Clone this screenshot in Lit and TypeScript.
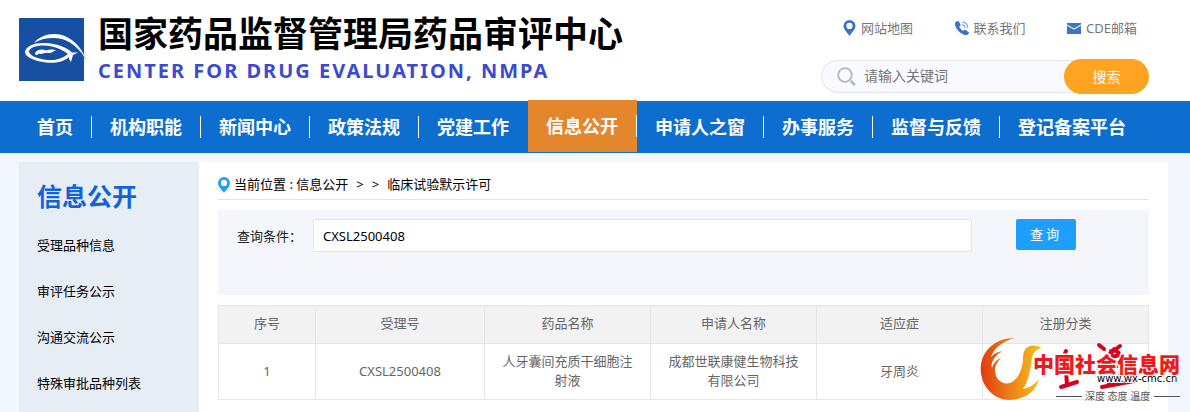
import { LitElement, html, css, svg } from "lit";
import { customElement, property } from "lit/decorators.js";
import { classMap } from "lit/directives/class-map.js";

const NAV = ["首页", "机构职能", "新闻中心", "政策法规", "党建工作", "信息公开", "申请人之窗", "办事服务", "监督与反馈", "登记备案平台"];
const SIDE = ["受理品种信息", "审评任务公示", "沟通交流公示", "特殊审批品种列表"];
const COLUMNS = ["序号", "受理号", "药品名称", "申请人名称", "适应症", "注册分类"];
const ROWS = [["1", "CXSL2500408", "人牙囊间充质干细胞注射液", "成都世联康健生物科技有限公司", "牙周炎", ""]];

const pin = svg`<path fill="currentColor" fill-rule="evenodd" d="M6 0a6 6 0 0 1 6 6c0 3.6-3.4 6-6 10C3.400 12 0 9.600 0 6a6 6 0 0 1 6-6zm0 2.800a3.100 3.100 0 1 0 0 6.200 3.100 3.100 0 0 0 0-6.200z"/>`;

@customElement("site-header")
class SiteHeader extends LitElement {
  static styles = css`
    :host { display: block; background: #fff; }
    .header { display: flex; justify-content: space-between; align-items: flex-start; padding: 0 41px 0 19px; min-height: 101px; box-sizing: border-box; }
    .brand { display: flex; gap: 11px; padding-top: 15px; }
    .emblem { width: 68px; height: 63px; margin-top: 3px; flex: none; }
    .title { margin: 0; font-size: 35px; line-height: 38px; font-weight: 700; color: #000; white-space: nowrap; }
    .subtitle { margin: 6px 0 0; font-size: 20px; line-height: 24px; font-weight: 700; letter-spacing: 2px; color: #3a4bcf; white-space: nowrap; }
    .tools { width: 328px; padding-top: 18px; }
    .links { display: flex; justify-content: space-between; padding: 0 12px 0 22px; }
    .link { display: flex; align-items: center; gap: 5px; font-size: 13px; line-height: 20px; color: #777; text-decoration: none; }
    .link svg { color: #3a74c8; flex: none; }
    .search { display: flex; margin-top: 21px; align-items: center; height: 35px; }
    .box { flex: 1; min-width: 0; display: flex; align-items: center; gap: 8px; height: 33px; box-sizing: border-box; border: 1px solid #e2e4e8; border-radius: 17px; background: #f9faff; padding-left: 15px; margin-right: -24px; padding-right: 24px; }
    .box input { flex: 1; min-width: 0; border: 0; outline: 0; background: none; padding: 0 0 2px; font: inherit; font-size: 14px; color: #555; }
    .box input::placeholder { color: #757575; opacity: 1; }
    .go { width: 85px; height: 35px; border: 0; border-radius: 18px; background: #ffa421; color: #fff; font: inherit; font-size: 14px; padding: 0 0 2px; position: relative; }
  `;
  render() {
    return html`
      <header class="header">
        <div class="brand">
          <svg class="emblem" viewBox="0 0 68 63" aria-hidden="true">
            <rect width="65" height="63" fill="#174fa3"/>
            <path fill="#fff" d="M15 25C20 18 31 14.500 41 16.500C52 19 61 27 67 41C61 32 54 24.500 43 21C33 18.500 22 20.500 15 25z"/>
            <path fill="#aebfd8" d="M64 36L68.500 43L65 40z"/>
            <path fill="#fff" fill-rule="evenodd" d="M6 34C7 28 15 24.500 26 25C38 25.500 47 29 53 34.500L59 34.500L54 37L52 44C50 42 50 40 50 39C45 44 36 45.500 27 44.500C15 43 6 39 6 34zM10 34C11 38 20 41.500 29 42C38 42.500 44 40 49 36C43 31 34 28 25 27.500C16 27.500 10 30 10 34z"/>
            <path fill="#fff" d="M16 35C19 31 24 31 27 32.500C31 31 35 31.500 37 32.500C34 33 33 35.500 29 35C26 34 23 37 20 35.500C19 37 16 38 16 35z"/>
          </svg>
          <div>
            <h1 class="title">国家药品监督管理局药品审评中心</h1>
            <p class="subtitle">CENTER FOR DRUG EVALUATION, NMPA</p>
          </div>
        </div>
        <div class="tools">
          <nav class="links" aria-label="快捷链接">
            <a class="link" href="#"><svg width="13" height="16" viewBox="0 0 12 16">${pin}</svg>网站地图</a>
            <a class="link" href="#"><svg width="14" height="14" viewBox="0 0 14 14"><path fill="currentColor" d="M.8 .8L3.500 0l2.300 4L4.300 5.500c.7 2 2 3.400 4 4.300L10 8.500 14 11.500C13.500 13.500 12 14.300 10 14 4.500 12.500 0 7 0 3c0-1 .2-1.700.8-2.200z"/><path fill="none" stroke="#7ea4dc" stroke-width="1.300" d="M7 3.800C9 3.800 10 5 10 6.800M7 1.200C10.500 1.200 12.800 3.500 12.800 7"/></svg>联系我们</a>
            <a class="link" href="#"><svg width="14" height="11" viewBox="0 0 14 11"><rect width="14" height="11" fill="currentColor"/><path d="M0 2l7 4 7-4" fill="none" stroke="#dbe8fa" stroke-width="1.400"/></svg>CDE邮箱</a>
          </nav>
          <form class="search" @submit=${(e: Event) => e.preventDefault()}>
            <div class="box">
              <svg width="19" height="19" viewBox="0 0 19 19" fill="none" stroke="#b7b7b7" aria-hidden="true"><circle cx="8" cy="8" r="6.800" stroke-width="1.800"/><path d="M13.800 14l4 4" stroke-width="2.600"/></svg>
              <input type="text" placeholder="请输入关键词" aria-label="请输入关键词">
            </div>
            <button class="go" type="submit">搜索</button>
          </form>
        </div>
      </header>`;
  }
}

@customElement("site-nav")
class SiteNav extends LitElement {
  @property() current = "";
  static styles = css`
    :host { display: block; background: #0e6ecf; }
    .list { display: flex; list-style: none; margin: 0; padding: 0 19px; height: 52px; }
    .item { display: flex; align-items: center; }
    .item:not(:last-child)::after { content: ""; width: 1px; height: 22px; background: #fff; }
    .item.before::after { background: none; }
    .item.active { height: 52px; margin-top: -1px; background: #e4862c; }
    .link { padding: 0 18px; font-size: 18px; line-height: 52px; font-weight: 700; color: #fff; text-decoration: none; white-space: nowrap; }
  `;
  render() {
    const at = NAV.indexOf(this.current);
    return html`<nav><ul class="list">
      ${NAV.map((n, i) => html`<li class=${classMap({ item: true, active: i === at, before: i === at - 1 })}><a class="link" href="#">${n}</a></li>`)}
    </ul></nav>`;
  }
}

@customElement("side-menu")
class SideMenu extends LitElement {
  static styles = css`
    :host { display: block; width: 180px; flex: none; background: #e6edf5; }
    .heading { margin: 0; padding: 16px 18px 0; font-size: 25px; line-height: 36px; font-weight: 700; color: #1262dc; }
    .list { display: grid; gap: 26px; list-style: none; margin: 0; padding: 21px 18px 20px; }
    .link { display: block; font-size: 13px; line-height: 20px; color: #000; text-decoration: none; white-space: nowrap; }
  `;
  render() {
    return html`<h2 class="heading">信息公开</h2>
      <ul class="list">${SIDE.map((s) => html`<li><a class="link" href="#">${s}</a></li>`)}</ul>`;
  }
}

@customElement("trial-search")
class TrialSearch extends LitElement {
  static styles = css`
    :host { display: block; flex: 1; min-width: 0; padding: 9px 19px 13px; background: #fff; font-size: 13px; }
    .crumbs { display: flex; align-items: center; gap: 4px; height: 28px; line-height: 26px; border-bottom: 1px solid #e3e3e3; color: #000; }
    .crumbs svg { color: #1e9fff; flex: none; }
    .crumbs a { color: inherit; text-decoration: none; }
    .trail { display: flex; gap: 8px; height: 28px; }
    .filter { display: flex; align-items: flex-start; margin-top: 10px; padding: 9px 73px 0 19px; height: 85px; box-sizing: border-box; background: #f4f6fb; }
    .label { line-height: 34px; width: 76px; flex: none; color: #222; }
    .field { flex: 1; min-width: 0; height: 33px; box-sizing: border-box; border: 1px solid #e3e3e3; border-radius: 2px; background: #fff; padding: 0 9px; font: inherit; color: #000; }
    .query { width: 60px; height: 31px; margin-left: 44px; padding: 0 0 2px; border: 0; border-radius: 2px; background: #1e9fff; color: #fff; font: inherit; letter-spacing: 3px; }
    .table { width: 100%; margin-top: 10px; border-collapse: collapse; table-layout: fixed; color: #666; line-height: 19px; text-align: center; }
    .table th, .table td { border: 1px solid #e6e6e6; font-weight: 400; padding: 8px 15px 9px; }
    .table th { background: #f2f2f2; padding-bottom: 10px; }
    .narrow { width: 97px; }
    .wide { width: 169px; }
  `;
  render() {
    return html`
      <nav class="crumbs" aria-label="当前位置"><svg width="12" height="16" viewBox="0 0 12 16">${pin}</svg><div class="trail"><span>当前位置 : <a href="#">信息公开</a></span><span>&gt;</span><span>&gt;</span><a href="#">临床试验默示许可</a></div></nav>
      <form class="filter" @submit=${(e: Event) => e.preventDefault()}>
        <label class="label" for="no">查询条件：</label>
        <input class="field" id="no" type="text" value="CXSL2500408">
        <button class="query" type="submit">查询</button>
      </form>
      <table class="table">
        <colgroup><col class="narrow"><col class="wide"><col><col><col><col></colgroup>
        <thead><tr>${COLUMNS.map((c) => html`<th scope="col">${c}</th>`)}</tr></thead>
        <tbody>${ROWS.map((r) => html`<tr>${r.map((c) => html`<td>${c}</td>`)}</tr>`)}</tbody>
      </table>`;
  }
}

@customElement("partner-mark")
class PartnerMark extends LitElement {
  static styles = css`
    :host { display: block; width: 204px; height: 72px; pointer-events: none; }
    .name { font-size: 21px; font-weight: 900; fill: #f01818; stroke: #fff; stroke-width: 3px; paint-order: stroke; }
    .site { font-family: "DejaVu Sans", sans-serif; font-size: 10px; fill: #000; stroke: #fff; stroke-width: 2px; paint-order: stroke; }
    .motto { font-size: 10px; fill: #555; }
  `;
  render() {
    return html`
      <svg width="204" height="72" viewBox="0 0 204 72">
        <defs><linearGradient id="flame"><stop offset="0" stop-color="#e23a12"/><stop offset=".5" stop-color="#ee8315"/><stop offset="1" stop-color="#f6c51c"/></linearGradient></defs>
        <path fill="url(#flame)" d="M35 2C15 2 1 15 .7 33C1 51 14 64 30 64C45 63 56 56 59 43C53 50 48 52 43 53C50 43 50 32 52 22C53 16 57 13 62 12C58 10 54 9 50 10C44 12 43 17 43 24C42 34 38 44 30 47C22 49 15 43 15 34C15 29 18 25 21 22C16 24 13 28 12 32C10 26 16 18 23 15C18 16 14 17 11 21C14 12 23 5 35 2z"/>
        <g fill="none" stroke="#d9001e" stroke-width="4" stroke-linecap="round" stroke-linejoin="round">
          <path d="M86 15L83 22L90 21L82 33L91 31M86 34L87 49M81 51L97 46"/>
          <path d="M119 9L124 13M140 10L127 20M134 13L141 19M122 23L140 19M131 15L129 48M118 34L142 29M122 51L154 45M144 33L137 44"/>
        </g>
        <text class="name" x="53" y="36">中国社会信息网</text>
        <text class="site" x="117" y="46">www.wx-cmc.cn</text>
        <path d="M76 60.500h26M174 60.500h26" stroke="#555"/>
        <text class="motto" x="105" y="64">深度 态度 温度</text>
      </svg>`;
  }
}

@customElement("app-root")
class AppRoot extends LitElement {
  static styles = css`
    :host { display: flex; flex-direction: column; position: relative; min-height: 100vh; background: #f2f7ff; font-family: "Noto Sans", "Noto Sans CJK SC", sans-serif; }
    .body { flex: 1; display: flex; margin: 9px 22px 0 19px; }
    .mark { position: absolute; top: 336px; right: 6px; }
  `;
  render() {
    return html`
      <site-header></site-header>
      <site-nav current="信息公开"></site-nav>
      <main class="body"><side-menu></side-menu><trial-search></trial-search></main>
      <partner-mark class="mark"></partner-mark>`;
  }
}
